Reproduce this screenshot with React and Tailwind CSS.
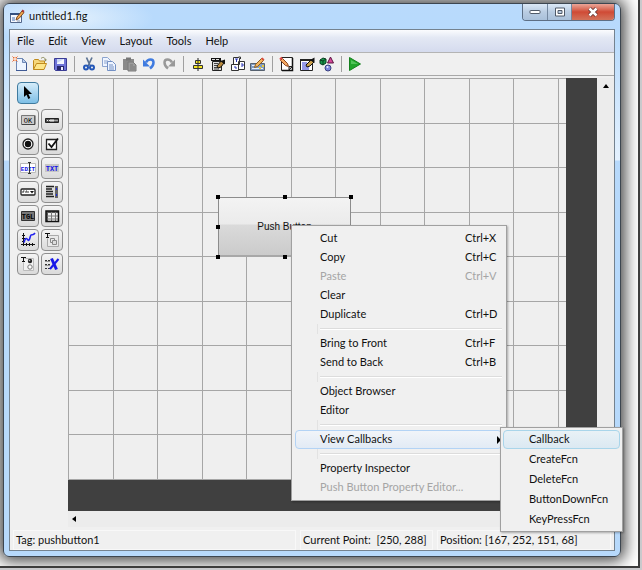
const NewIcon = () => (
  <svg viewBox="0 0 16 16" className="w-4 h-4">
    <path d="M4.500 2.500h6l4 4v8h-10z" fill="#eef5ff" stroke="#6f88b4" />
    <path d="M4 14.500h11M14.500 7v8" stroke="#3f5a94" />
    <path d="M10.500 2.500v4h4z" fill="#b9cdee" stroke="#6f88b4" />
    <circle cx="3" cy="3" r="2.200" fill="#f6b48c" />
    <path d="M0.500 0.500l5 5M5.500 0.500l-5 5" stroke="#e0673a" />
    <circle cx="3" cy="3" r="1" fill="#fff" />
  </svg>
)

const OpenIcon = () => (
  <svg viewBox="0 0 16 16" className="w-4 h-4">
    <path d="M1.500 13.500v-9l1-1h4l1 1.500h5v3" fill="#f6d77a" stroke="#c08a1c" />
    <path d="M1.500 13.500l3-6h10l-2.500 6z" fill="#fde68a" stroke="#c08a1c" />
    <path d="M9 2.500c2-2 4-1 4.500 1.500" fill="none" stroke="#8b8b5a" />
    <path d="M12 3.500h3l-1.500 2z" fill="#8b8b5a" />
  </svg>
)

const SaveIcon = () => (
  <svg viewBox="0 0 16 16" className="w-4 h-4">
    <path d="M2.500 2.500h12v12h-11l-1-1z" fill="#6f74d8" stroke="#3a3c94" />
    <path d="M5 3h7v5H5z" fill="#f2f5ff" />
    <path d="M5 3l7 0-7 4z" fill="#c9d6f6" />
    <path d="M5 10h7v4H5z" fill="#26276b" />
    <path d="M9 11h2v3H9z" fill="#eef" />
  </svg>
)

const CutIcon = () => (
  <svg viewBox="0 0 16 16" className="w-4 h-4" fill="none">
    <path d="M5.500 1.500l3.500 8M11 1.500L7 10" stroke="#5c7394" strokeWidth="1.700" />
    <circle cx="5" cy="11.500" r="2" stroke="#2558b8" strokeWidth="2" />
    <circle cx="11" cy="11.500" r="2" stroke="#2558b8" strokeWidth="2" />
  </svg>
)

const CopyIcon = () => (
  <svg viewBox="0 0 16 16" className="w-4 h-4">
    <path d="M1.500 1.500h5l3 3v6h-8z" fill="#eef4ff" stroke="#8ca4cf" />
    <path d="M3 5h4M3 7h4" stroke="#8ca4cf" />
    <path d="M6.500 5.500h5l3 3v6h-8z" fill="#eef4ff" stroke="#7390c4" />
    <path d="M8 9h4M8 11h5M8 13h5" stroke="#7390c4" />
  </svg>
)

const PasteIcon = () => (
  <svg viewBox="0 0 16 16" className="w-4 h-4">
    <path d="M2 3h11v11H2z" fill="#8a8a8a" />
    <path d="M5 1.500h5v3H5z" fill="#777" />
    <path d="M7 6h5l3 3v6H7z" fill="#9c9c9c" stroke="#7b7b7b" />
    <path d="M9 9h3M9 11h5M9 13h5" stroke="#7b7b7b" />
  </svg>
)

const UndoIcon = () => (
  <svg viewBox="0 0 16 16" className="w-4 h-4">
    <path d="M5 6.500c2-4 7.500-4 7.500 0 0 3-1.500 4.500-3.500 6" fill="none" stroke="#3f7be0" strokeWidth="2.500" />
    <path d="M2 3.500v7h7z" fill="#3f7be0" />
  </svg>
)

const RedoIcon = () => (
  <svg viewBox="0 0 16 16" className="w-4 h-4">
    <path d="M11 6.500c-2-4-7.500-4-7.500 0 0 3 1.500 4.500 3.500 6" fill="none" stroke="#999" strokeWidth="2.500" />
    <path d="M14 3.500v7H7z" fill="#999" />
  </svg>
)

const AlignIcon = () => (
  <svg viewBox="0 0 16 16" className="w-4 h-4">
    <path d="M8 2v13" stroke="#222" />
    <path d="M5.500 4.500h5v3h-5zM3.500 9.500h9v3h-9z" fill="#f4e51f" stroke="#333" />
    <path d="M8 4v4M8 9v4" stroke="#333" />
  </svg>
)

const MenuEditorIcon = () => (
  <svg viewBox="0 0 16 16" className="w-4 h-4">
    <path d="M1 2h10v3H1z" fill="#111" />
    <path d="M2 3.500h3M6 3.500h3" stroke="#ddd" />
    <path d="M2.500 5.500h9v9h-9z" fill="#ddd" stroke="#222" />
    <path d="M4 7.500h4M4 9.500h6M4 11.500h5M4 13h5" stroke="#444" />
    <path d="M7 10l4-5 3 2-3 4-3 1z" fill="#b98a3e" stroke="#111" />
    <path d="M10.500 5l4.500 3.500V3.500z" fill="#111" />
  </svg>
)

const TabOrderIcon = () => (
  <svg viewBox="0 0 16 16" className="w-4 h-4" fill="#fff" stroke="#333">
    <path d="M3.500 1.500h6v7h-6zM8.500 5.500h6v8h-6zM1.500 8.500h7v6h-7z" />
    <path d="M5 3h3M6.500 3v3M11 8h2v2h-2M4 11h2v2" stroke="#2b36b8" fill="none" />
    <path d="M8.500 1h2v2" />
  </svg>
)

const ToolbarEditorIcon = () => (
  <svg viewBox="0 0 16 16" className="w-4 h-4">
    <path d="M.5 7.500h14v7H.5z" fill="#7f9cc4" stroke="#56616f" />
    <path d="M2 9.500h3M2 12.500h11" stroke="#e8eef7" />
    <path d="M9 12h2M12 10h2" stroke="#e5c840" strokeWidth="2" />
    <path d="M4.500 11.500l1-3 6-6 2 2-6 6z" fill="#f0b45c" stroke="#8a5a20" />
    <path d="M11 2.500l1.500-1 2 2-1.500 1.200z" fill="#d84c3c" />
  </svg>
)

const EditorIcon = () => (
  <svg viewBox="0 0 16 16" className="w-4 h-4">
    <path d="M2.500 1.500h11v13h-11z" fill="#fff" stroke="#222" />
    <path d="M13.500 2v12.500H3" fill="none" stroke="#111" strokeWidth="1.500" />
    <path d="M10 14v-3.500h3.500z" fill="#bbb" stroke="#222" />
    <path d="M9.500 10.500l-1-3-5-5-2 2 5 5z" fill="#f3a861" stroke="#8a4520" />
    <path d="M1 3.500l2-2" stroke="#d44" strokeWidth="2" />
  </svg>
)

const InspectorIcon = () => (
  <svg viewBox="0 0 16 16" className="w-4 h-4">
    <path d="M1.500 3.500h12v11h-12z" fill="#fff" stroke="#222" />
    <path d="M1 3h12v2H1z" fill="#222" />
    <path d="M3 7h5M3 9h4M3 11h7M3 13h7" stroke="#2c35d6" />
    <path d="M7 9l5-5 3 2-4 4-3 1z" fill="#caa04d" stroke="#111" />
    <path d="M11 4l4.500 3V1.500z" fill="#111" />
  </svg>
)

const ObjectsIcon = () => (
  <svg viewBox="0 0 16 16" className="w-4 h-4">
    <path d="M1 4l3-2 3 1v4l-3 2-3-1.500z" fill="#17994a" stroke="#0a3d20" />
    <path d="M4 5v4M1 4l3 1 3-2" fill="none" stroke="#0a3d20" />
    <path d="M11.500 1l3 6h-6z" fill="#d84a9c" stroke="#5b1540" />
    <circle cx="9" cy="12" r="3" fill="#7c86dd" stroke="#3a4080" />
    <circle cx="8.500" cy="11" r="1" fill="#e8ebff" />
  </svg>
)

const RunIcon = () => (
  <svg viewBox="0 0 16 16" className="w-4 h-4">
    <path d="M1.500 1.500l11 6.500-11 6.500z" fill="#22a52c" stroke="#15801e" />
    <path d="M3 4l7 4H3z" fill="#52c45a" />
  </svg>
)

const FigIcon = () => (
  <svg viewBox="0 0 16 16" className="w-4 h-4">
    <path d="M1.500 4.500h11v9h-11z" fill="#f4f8ff" stroke="#53688c" />
    <path d="M1 4h12v2H1z" fill="#34507f" />
    <path d="M3 8h3v4H3z" fill="#9db4d8" />
    <path d="M8 12h3" stroke="#8393ac" />
    <path d="M7 11l1-3 5-6 2 1.500-5 6z" fill="#f0a850" stroke="#7c4a20" />
    <path d="M12.500 2l1-1.500 2 1.500-1 1.500z" fill="#a33" />
  </svg>
)

const SelectIcon = () => (
  <svg viewBox="0 0 16 16" className="w-4 h-4">
    <path d="M4 1v11l2.500-2.300L8.300 14l2-.9-1.900-4H12z" fill="#000" />
  </svg>
)

const PushButtonIcon = () => (
  <svg viewBox="0 0 16 16" className="w-4 h-4">
    <path d="M1.500 3.500h13v9h-13z" fill="#ccc" stroke="#777" />
    <path d="M2 12.500h13v-9" fill="none" stroke="#444" />
    <text x="8" y="10.500" textAnchor="middle" fontSize="7" fontFamily="Liberation Mono, monospace">OK</text>
  </svg>
)

const SliderIcon = () => (
  <svg viewBox="0 0 16 16" className="w-4 h-4">
    <path d="M1.500 6.500h13v4h-13z" fill="#555" stroke="#222" />
    <path d="M6 7.500h4v2H6z" fill="#ddd" />
    <path d="M3 8.500h1M5 8.500h1M10.500 8.500h1M12.500 8.500h1" stroke="#eee" />
  </svg>
)

const RadioIcon = () => (
  <svg viewBox="0 0 16 16" className="w-4 h-4">
    <circle cx="8" cy="8" r="5" fill="#fff" stroke="#222" strokeWidth="1.300" />
    <circle cx="8" cy="8" r="3.200" fill="#111" />
  </svg>
)

const CheckIcon = () => (
  <svg viewBox="0 0 16 16" className="w-4 h-4" fill="none">
    <path d="M2.500 3.500h10v10h-10z" fill="#fff" stroke="#222" strokeWidth="1.300" />
    <path d="M4.500 7.500l3 3.500 6.500-8.500" stroke="#111" strokeWidth="1.800" />
  </svg>
)

const EditTextIcon = () => (
  <svg viewBox="0 0 16 16" className="w-4 h-4">
    <path d="M.5 3.500h15v9H.5z" fill="#fff" stroke="#bbb" />
    <text x="8" y="10.500" textAnchor="middle" fontSize="6" fontWeight="700" fill="#1414e6" fontFamily="Liberation Mono, monospace">EDIT</text>
    <path d="M9.500 2v12M8 2.500h3M8 13.500h3" stroke="#333" />
  </svg>
)

const StaticTextIcon = () => (
  <svg viewBox="0 0 16 16" className="w-4 h-4">
    <path d="M1 4h14v8H1z" fill="#c6c6c6" />
    <text x="8" y="10.500" textAnchor="middle" fontSize="7" fontWeight="700" fill="#1414e6" fontFamily="Liberation Mono, monospace">TXT</text>
  </svg>
)

const PopupIcon = () => (
  <svg viewBox="0 0 16 16" className="w-4 h-4">
    <rect x="1" y="5" width="14" height="6" rx="1" fill="#fff" stroke="#222" strokeWidth="1.300" />
    <path d="M3 9V7h1.500M6 9V7h1M8 9V7" fill="none" stroke="#333" />
    <path d="M10 7h4l-2 2.500z" fill="#111" />
  </svg>
)

const ListboxIcon = () => (
  <svg viewBox="0 0 16 16" className="w-4 h-4">
    <path d="M2 2h12v12H2z" fill="#ddd" />
    <path d="M2 2.500h8M2 5h6M2 7.500h7M2 10h7M2 12.500h8" stroke="#222" strokeWidth="1.300" />
    <path d="M11 2h3v12h-3z" fill="#666" />
    <path d="M12 4h1v2h-1zM12 10h1v2h-1z" fill="#1c2be0" />
  </svg>
)

const ToggleIcon = () => (
  <svg viewBox="0 0 16 16" className="w-4 h-4">
    <path d="M1.500 3.500h13v9h-13z" fill="#777" stroke="#333" />
    <text x="8" y="10.500" textAnchor="middle" fontSize="7" fontWeight="700" fontFamily="Liberation Mono, monospace">TGL</text>
  </svg>
)

const TableIcon = () => (
  <svg viewBox="0 0 16 16" className="w-4 h-4">
    <path d="M2 3h13v11H2z" fill="#eee" />
    <path d="M2 3h13v2H2zM2 3h2v10H2z" fill="#555" />
    <path d="M2 8h13M2 11h13M7.500 3v10M11.500 3v10" stroke="#777" />
    <path d="M2 3h12.500v10.500H2z" fill="none" stroke="#111" strokeWidth="1.500" />
  </svg>
)

const AxesIcon = () => (
  <svg viewBox="0 0 16 16" className="w-4 h-4" fill="none">
    <path d="M3.500 1v13M1 12.500h14" stroke="#111" />
    <path d="M2 3.500h3M2 6.500h3M2 9.500h3M6.500 11v3M9.500 11v3M12.500 11v3" stroke="#111" />
    <path d="M4 10.500c1.500-6 3-4 4-2.500 1.500 2 2-4 3-5 1-1 2 1 4-2" stroke="#2323ee" strokeWidth="1.600" />
  </svg>
)

const PanelIcon = () => (
  <svg viewBox="0 0 16 16" className="w-4 h-4" fill="none">
    <path d="M4.500 3.500h10v11h-11v-8" fill="#e9e9e9" stroke="#aaa" />
    <path d="M1 1.500h5M3.500 1v5M2 5.500h3" stroke="#111" />
    <path d="M6.500 6.500h4v4h-4z" stroke="#888" />
    <path d="M8.500 8.500h4v4h-4z" fill="#ddd" stroke="#888" />
  </svg>
)

const ButtonGroupIcon = () => (
  <svg viewBox="0 0 16 16" className="w-4 h-4" fill="none">
    <path d="M4.500 2.500h9v12h-10v-8" fill="#f2f2f2" stroke="#bbb" />
    <path d="M1 1.500h5M3.500 1v5M2 5.500h3" stroke="#111" />
    <circle cx="10" cy="5" r="2.200" fill="#222" />
    <circle cx="9.500" cy="4.500" r=".8" fill="#bbb" />
    <circle cx="10" cy="11" r="2.200" fill="#fff" stroke="#777" />
  </svg>
)

const ActiveXIcon = () => (
  <svg viewBox="0 0 16 16" className="w-4 h-4" fill="none">
    <path d="M1 4.500h6M1 8.500h5M1 12.500h5" stroke="#333" strokeDasharray="2 1" />
    <path d="M1 5.500h5M1 9.500h5" stroke="#999" />
    <path d="M7.500 2.500l5 11" stroke="#1717e8" strokeWidth="3" />
    <path d="M14.500 3L6 13" stroke="#1717e8" strokeWidth="2" />
  </svg>
)

const menus = ['File', 'Edit', 'View', 'Layout', 'Tools', 'Help']

const toolGroups = [
  [
    { label: 'New', Icon: NewIcon },
    { label: 'Open', Icon: OpenIcon },
    { label: 'Save', Icon: SaveIcon },
  ],
  [
    { label: 'Cut', Icon: CutIcon },
    { label: 'Copy', Icon: CopyIcon },
    { label: 'Paste', Icon: PasteIcon },
    { label: 'Undo', Icon: UndoIcon },
    { label: 'Redo', Icon: RedoIcon },
  ],
  [
    { label: 'Align Objects', Icon: AlignIcon },
    { label: 'Menu Editor', Icon: MenuEditorIcon },
    { label: 'Tab Order Editor', Icon: TabOrderIcon },
    { label: 'Toolbar Editor', Icon: ToolbarEditorIcon },
  ],
  [
    { label: 'Editor', Icon: EditorIcon },
    { label: 'Property Inspector', Icon: InspectorIcon },
    { label: 'Object Browser', Icon: ObjectsIcon },
  ],
  [{ label: 'Run Figure', Icon: RunIcon }],
]

const palette = [
  { label: 'Push Button', Icon: PushButtonIcon },
  { label: 'Slider', Icon: SliderIcon },
  { label: 'Radio Button', Icon: RadioIcon },
  { label: 'Check Box', Icon: CheckIcon },
  { label: 'Edit Text', Icon: EditTextIcon },
  { label: 'Static Text', Icon: StaticTextIcon },
  { label: 'Pop-up Menu', Icon: PopupIcon },
  { label: 'Listbox', Icon: ListboxIcon },
  { label: 'Toggle Button', Icon: ToggleIcon },
  { label: 'Table', Icon: TableIcon },
  { label: 'Axes', Icon: AxesIcon },
  { label: 'Panel', Icon: PanelIcon },
  { label: 'Button Group', Icon: ButtonGroupIcon },
  { label: 'ActiveX Control', Icon: ActiveXIcon },
]

const contextMenu = [
  [
    { label: 'Cut', keys: 'Ctrl+X' },
    { label: 'Copy', keys: 'Ctrl+C' },
    { label: 'Paste', keys: 'Ctrl+V', disabled: true },
    { label: 'Clear' },
    { label: 'Duplicate', keys: 'Ctrl+D' },
  ],
  [
    { label: 'Bring to Front', keys: 'Ctrl+F' },
    { label: 'Send to Back', keys: 'Ctrl+B' },
  ],
  [{ label: 'Object Browser' }, { label: 'Editor' }],
  [{ label: 'View Callbacks', submenu: ['Callback', 'CreateFcn', 'DeleteFcn', 'ButtonDownFcn', 'KeyPressFcn'] }],
  [{ label: 'Property Inspector' }, { label: 'Push Button Property Editor...', disabled: true }],
]

const handles = [
  '-left-0.5 -top-0.5',
  'left-1/2 -ml-0.5 -top-0.5',
  '-right-0.5 -top-0.5',
  '-left-0.5 top-1/2 -mt-0.5',
  '-right-0.5 top-1/2 -mt-0.5',
  '-left-0.5 -bottom-0.5',
  'left-1/2 -ml-0.5 -bottom-0.5',
  '-right-0.5 -bottom-0.5',
]

const gridSteps = Array.from({ length: 40 }, (_, i) => i * 44.5)

function TitleBar() {
  return (
    <header className="flex items-start h-[25px]">
      <div className="flex items-center gap-1 h-full">
        <FigIcon />
        <h1>untitled1.fig</h1>
      </div>
      <div className="ml-auto flex h-[17px] rounded-b border border-t-0 border-[#5d6f85] overflow-hidden">
        <button aria-label="Minimize" className="w-[25px] flex items-center justify-center border-r border-[#7488a0] bg-linear-to-b from-[#dbe8f6] via-[#b9cce2] to-[#a9c0da]">
          <svg viewBox="0 0 12 6" className="w-3 h-1.5">
            <rect x="1" y="1.500" width="10" height="3" rx=".5" fill="#fff" stroke="#505a68" />
          </svg>
        </button>
        <button aria-label="Maximize" className="w-6 flex items-center justify-center border-r border-[#7488a0] bg-linear-to-b from-[#dbe8f6] via-[#b9cce2] to-[#a9c0da]">
          <svg viewBox="0 0 12 10" className="w-3 h-2.5">
            <path d="M1.500 1h9v8h-9z" fill="#fff" stroke="#505a68" />
            <path d="M4 3.500h4v3H4z" fill="#b9cce2" stroke="#505a68" />
          </svg>
        </button>
        <button aria-label="Close" className="w-[42px] flex items-center justify-center bg-linear-to-b from-[#e9a598] via-[#cf4a35] to-[#d2725a]">
          <svg viewBox="0 0 12 10" className="w-3 h-2.5">
            <path d="M2.500 1.500l7 7M9.500 1.500l-7 7" stroke="#5b3030" strokeWidth="4" />
            <path d="M2.500 1.500l7 7M9.500 1.500l-7 7" stroke="#fff" strokeWidth="2.500" />
          </svg>
        </button>
      </div>
    </header>
  )
}

function Toolbar() {
  return (
    <div className="flex items-center h-[23px] border-b border-[#a8a8a8]">
      {toolGroups.map((group, i) => (
        <div key={i} className="flex items-center">
          {i > 0 && <div className="w-px h-4 mx-1 bg-[#a0a0a0]" />}
          {group.map(({ label, Icon }) => (
            <button key={label} aria-label={label} className="w-5 h-5 flex items-center justify-center">
              <Icon />
            </button>
          ))}
        </div>
      ))}
    </div>
  )
}

function Palette() {
  return (
    <aside className="w-[58px] shrink-0 pl-[7px] pt-1">
      <button aria-label="Select" className="w-[22px] h-[22px] flex items-center justify-center rounded-sm border border-[#3f7a9e] bg-linear-to-b from-[#d5ecf9] to-[#7dbfe6]">
        <SelectIcon />
      </button>
      <div className="mt-[5px] w-[46px] grid grid-cols-2 gap-0.5">
        {palette.map(({ label, Icon }) => (
          <button
            key={label}
            aria-label={label}
            className="w-[22px] h-[22px] flex items-center justify-center rounded-sm border border-[#8e8e8e] bg-linear-to-b from-[#f4f4f4] to-[#dadada]"
          >
            <Icon />
          </button>
        ))}
      </div>
    </aside>
  )
}

function Canvas() {
  return (
    <div className="flex-1 flex pr-[31px] pb-[31px] bg-[#404040]">
      <div className="relative flex-1 overflow-hidden bg-[#efefef]">
        <svg className="absolute inset-0 w-full h-full" shapeRendering="crispEdges">
          {gridSteps.map((n) => (
            <g key={n} fill="#a6a6a6">
              <rect x={Math.round(n)} y="0" width="1" height="100%" />
              <rect x="0" y={Math.round(n)} width="100%" height="1" />
            </g>
          ))}
        </svg>
        <div className="absolute left-[150px] top-[119px] w-[133px] h-[60px]">
          <button className="w-full h-full border border-[#8c8c8c] border-b-2 border-b-[#a8a8a8] bg-[linear-gradient(#f3f3f3,#ebebeb_46%,#dadada_47%,#cbcbcb)] font-['Liberation_Sans',Arial,sans-serif] text-[10px]">
            Push Button
          </button>
          {handles.map((pos) => (
            <span key={pos} className={`absolute w-1 h-1 bg-black ${pos}`} />
          ))}
        </div>
      </div>
    </div>
  )
}

function StatusBar() {
  return (
    <footer className="flex h-5 mx-[3px] mt-[3px] gap-1">
      <div className="flex-1 pl-[2px] border border-[#f8f8f8] leading-[18px]">Tag: pushbutton1</div>
      <div className="w-[133px] pl-[2px] border border-[#f8f8f8] leading-[18px] whitespace-pre">{'Current Point:  [250, 288]'}</div>
      <div className="w-[174px] pl-[2px] border border-[#f8f8f8] leading-[18px]">Position: [167, 252, 151, 68]</div>
    </footer>
  )
}

function ContextMenu() {
  return (
    <div role="menu" className="absolute left-[287px] top-[221px] w-[216px] p-[3px] pr-1 border border-[#a0a0a0] bg-[#f0f0f0] shadow-[1px_1px_2px_rgba(0,0,0,0.3)]">
      {contextMenu.map((group, i) => (
        <div key={i}>
          {i > 0 && (
            <div className="h-2.5 ml-[22px] pl-0.5 flex items-center border-l border-[#e2e2e2]">
              <div className="flex-1 h-0.5 border-t border-[#dcdcdc] bg-white" />
            </div>
          )}
          {group.map(({ label, keys, disabled, submenu }) => (
            <div key={label} className="relative">
              <button
                role="menuitem"
                disabled={disabled}
                className={`w-full h-[19px] pl-6 pr-1.5 flex items-center border rounded-sm ${
                  submenu ? 'border-[#b3d3f5] bg-linear-to-b from-[#f1f4f9] to-[#e2ebf5]' : 'border-transparent'
                } ${disabled ? 'text-[#a5a5a5]' : ''}`}
              >
                {label}
                {keys && <span className="ml-auto w-[30px] text-left whitespace-nowrap">{keys}</span>}
                {submenu && (
                  <svg viewBox="0 0 4 8" className="ml-auto -mr-1.5 w-1 h-2">
                    <path d="M0 0l4 4-4 4z" />
                  </svg>
                )}
              </button>
              {submenu && <SubMenu items={submenu} />}
            </div>
          ))}
        </div>
      ))}
    </div>
  )
}

function SubMenu({ items }) {
  return (
    <div role="menu" className="absolute left-[205px] -top-[3px] w-[123px] p-[2px] flex flex-col gap-px border border-[#a0a0a0] bg-[#f0f0f0] shadow-[1px_1px_2px_rgba(0,0,0,0.3)]">
      {items.map((item, i) => (
        <button
          key={item}
          role="menuitem"
          className={`h-[19px] pl-[25px] flex items-center border rounded-sm ${
            i === 0 ? 'border-[#a9d5ea] bg-linear-to-b from-[#e9f1f6] to-[#dbe9f2]' : 'border-transparent'
          }`}
        >
          {item}
        </button>
      ))}
    </div>
  )
}

export default function App() {
  return (
    <div className="min-h-screen flex pr-0.5 pb-0.5 bg-[#c9c9cc] font-[Lato,'Open_Sans',sans-serif] text-[11px] text-[#111]">
      <div className="flex-1 flex pt-[3px] pl-[3px] pr-[17px] pb-[9px] border-r-2 border-b-2 border-[#3c3c3c] bg-white overflow-hidden">
        <div className="relative flex-1 flex flex-col px-[5px] pb-[5px] rounded-md border border-[#3d4650] bg-[radial-gradient(90px_24px_at_60px_14px,#e6f2fd,transparent),linear-gradient(#b9dafc_0,#b7dafc_26px,#e4f1fe_156px,#b7d9fb_157px)] shadow-[0_0_16px_4px_rgba(0,0,0,0.75)]">
          <TitleBar />
          <div className="flex-1 flex flex-col border border-[#74828f] bg-[#f0f0f0]">
            <nav className="flex items-center h-[23px] pl-[7px] gap-3.5 border-b border-[#b4b4b4] bg-linear-to-b from-[#fbfcfe] from-0% via-[#e3e8f4] via-35% to-[#d5dbee]">
              {menus.map((menu) => (
                <button key={menu}>{menu}</button>
              ))}
            </nav>
            <Toolbar />
            <main className="flex-1 flex pt-0.5">
              <Palette />
              <div className="flex-1 flex flex-col">
                <Canvas />
                <div className="flex items-center h-4 pl-1 bg-[#ececec]">
                  <svg viewBox="0 0 4 6" className="w-1 h-1.5">
                    <path d="M4 0L0 3l4 3z" />
                  </svg>
                </div>
              </div>
              <div className="w-[17px] pt-1.5 flex justify-center items-start bg-[#ececec]">
                <svg viewBox="0 0 6 4" className="w-1.5 h-1">
                  <path d="M0 4l3-4 3 4z" />
                </svg>
              </div>
            </main>
            <StatusBar />
          </div>
          <ContextMenu />
        </div>
      </div>
    </div>
  )
}
